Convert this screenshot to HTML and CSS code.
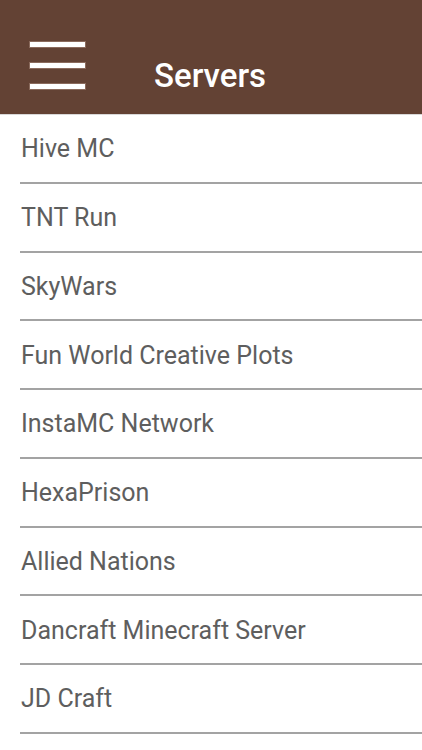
FILE: index.html
```html
<!DOCTYPE html>
<html>
<head>
<meta charset="utf-8">
<link rel="stylesheet" href="styles.css">
</head>
<body>
<header class="topbar">
  <div class="menu">
    <span class="bar"></span>
    <span class="bar"></span>
    <span class="bar"></span>
  </div>
  <h1 class="title">Servers</h1>
</header>
<ul class="list">
  <li class="item">Hive MC</li>
  <li class="item">TNT Run</li>
  <li class="item">SkyWars</li>
  <li class="item">Fun World Creative Plots</li>
  <li class="item">InstaMC Network</li>
  <li class="item">HexaPrison</li>
  <li class="item">Allied Nations</li>
  <li class="item">Dancraft Minecraft Server</li>
  <li class="item">JD Craft</li>
</ul>
</body>
</html>
```
FILE: styles.css
```css
html, body {
  margin: 0;
  padding: 0;
  background: #ffffff;
  font-family: Roboto, "Liberation Sans", sans-serif;
}
.topbar {
  height: 115px;
  background: #634234;
  display: flex;
  align-items: flex-start;
  border-bottom: 1px solid #d8d8d8;
  box-sizing: border-box;
}
.menu {
  margin-left: 30px;
  margin-top: 42px;
  width: 55px;
  display: flex;
  flex-direction: column;
  gap: 16px;
}
.bar {
  display: block;
  height: 5px;
  background: #ffffff;
  box-shadow: 0 0 0 1px #8a6a5c;
}
.title {
  margin: 59px 0 0 69px;
  font-size: 33px;
  line-height: 1;
  font-weight: 500;
  color: #ffffff;
}
.list {
  list-style: none;
  margin: 0;
  padding: 0 0 0 20px;
}
.item {
  height: 68.75px;
  box-sizing: border-box;
  border-bottom: 2px solid #a3a3a3;
  display: flex;
  align-items: center;
  padding-left: 1px;
  padding-top: 1px;
  font-size: 25px;
  color: #5e5e5e;
}
```
